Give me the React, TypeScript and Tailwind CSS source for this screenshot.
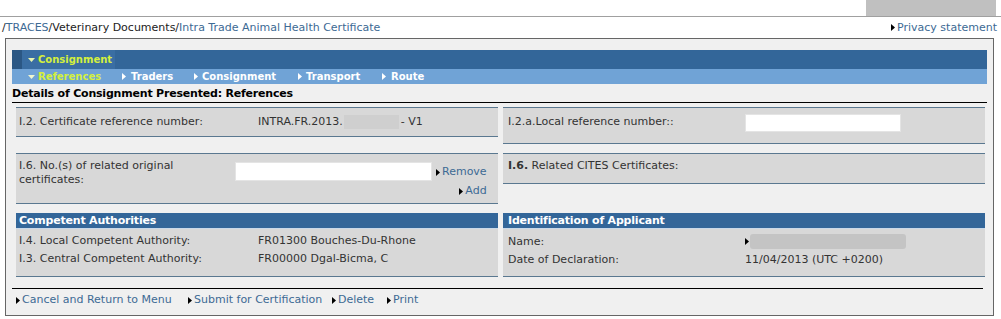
import React from 'react';

const Right = ({ color = '#000' }: { color?: string }) => (
  <svg width="4" height="7" viewBox="0 0 4 7" className="inline-block shrink-0 mr-[2px]">
    <path d="M0 0L4 3.5L0 7Z" fill={color} />
  </svg>
);

const Down = ({ color }: { color: string }) => (
  <svg width="7" height="4" viewBox="0 0 7 4" className="inline-block shrink-0 mr-[3px]">
    <path d="M0 0H7L3.5 4Z" fill={color} />
  </svg>
);

const Cell: React.FC<{ className?: string; children: React.ReactNode }> = ({ className = '', children }) => (
  <div className={`w-[482px] border-y border-[#5a7890] bg-[#d8d8d8] ${className}`}>{children}</div>
);

const App: React.FC = () => {
  return (
    <div className="w-[1001px] h-[319px] bg-white overflow-hidden font-['DejaVu_Sans',Verdana,sans-serif] text-[11px] leading-[14px] text-[#333]">
      <div className="h-[17px] flex justify-end border-b border-[#a0a0a0]">
        <div className="w-[130px] h-[16px] bg-[#c0c0c0] mr-[5px]" />
      </div>

      <div className="h-[20px] flex items-center justify-between pl-[2px] pr-[4px] pt-[1px]">
        <div>
          <span className="text-[#222]">/</span>
          <span className="text-[#3d6a94]">TRACES</span>
          <span className="text-[#222]">/Veterinary Documents/</span>
          <span className="text-[#3d6a94]">Intra Trade Animal Health Certificate</span>
        </div>
        <div className="flex items-center">
          <Right />
          <span className="text-[#3d6a94]">Privacy statement</span>
        </div>
      </div>

      <div className="ml-[5px] mt-[1px] w-[989px] h-[278px] border border-[#666] bg-[#f0f0f0] pt-[11px] pl-[6px]">
        <div className="w-[975px] h-[19px] bg-[#336699] flex">
          <div className="w-[10px] bg-[#2b5784]" />
          <div className="w-[93px] bg-[#3a6ea3] flex items-center pl-[6px] text-[10px] font-bold text-[#d4f03c]">
            <Down color="#e8f4b0" />
            Consignment
          </div>
        </div>
        <div className="w-[975px] h-[15px] bg-[#70a3d6] flex items-center pl-[16px] text-[10px] font-bold text-white">
          <span className="w-[94px] text-[#d4f03c] flex items-center">
            <Down color="#f0f6d0" />
            References
          </span>
          <span className="w-[72px] flex items-center">
            <Right color="#fff" />
            <span className="ml-[3px]">Traders</span>
          </span>
          <span className="w-[104px] flex items-center">
            <Right color="#fff" />
            <span className="ml-[2px]">Consignment</span>
          </span>
          <span className="w-[84px] flex items-center">
            <Right color="#fff" />
            <span className="ml-[2px]">Transport</span>
          </span>
          <span className="flex items-center">
            <Right color="#fff" />
            <span className="ml-[3px]">Route</span>
          </span>
        </div>

        <div className="w-[975px] h-[19px] flex items-end border-b border-black pb-[1px] font-bold text-black tracking-[-0.2px]">
          Details of Consignment Presented: References
        </div>

        <div className="pl-[4px] pt-[4px] flex flex-col gap-[9px]">
          <div className="flex gap-[5px] items-start">
            <Cell className="h-[30px] flex items-center pl-[3px]">
              <span className="w-[239px]">I.2. Certificate reference number:</span>
              <span>INTRA.FR.2013.</span>
              <span className="w-[55px] h-[14px] bg-[#cfcfcf] ml-[1px]" />
              <span className="ml-[2px]">- V1</span>
            </Cell>
            <Cell className="h-[37px] flex items-start pl-[5px] pt-[6px]">
              <span className="w-[237px] mt-[1px]">I.2.a.Local reference number::</span>
              <input
                type="text"
                className="w-[156px] h-[18px] bg-white border border-[#e4e4e4] outline-none"
              />
            </Cell>
          </div>

          <div className="flex gap-[5px] items-start">
            <Cell className="h-[51px] flex pl-[3px]">
              <div className="w-[216px] pt-[5px]">
                I.6. No.(s) of related original
                <br />
                certificates:
              </div>
              <div className="pt-[8px]">
                <input
                  type="text"
                  className="w-[197px] h-[19px] bg-white border border-[#e4e4e4] outline-none"
                />
              </div>
              <div className="ml-[4px] pt-[11px] flex flex-col items-end">
                <span className="flex items-center text-[#3d6a94]">
                  <Right />
                  Remove
                </span>
                <span className="flex items-center text-[#3d6a94] mt-[5px]">
                  <Right />
                  Add
                </span>
              </div>
            </Cell>
            <Cell className="h-[31px] pl-[5px] pt-[5px]">
              <span className="font-bold">I.6.</span> Related CITES Certificates:
            </Cell>
          </div>

          <div className="flex gap-[5px] items-start">
            <div className="w-[482px] border-b border-[#5a7890]">
              <div className="h-[15px] bg-[#336699] border-b border-[#c9d9ea] box-content pl-[3px] flex items-center font-bold text-white tracking-[-0.2px]">
                Competent Authorities
              </div>
              <div className="h-[47px] bg-[#d8d8d8] pl-[3px] pt-[5px] flex flex-col gap-[4px]">
                <div className="flex">
                  <span className="w-[239px]">I.4. Local Competent Authority:</span>
                  <span>FR01300 Bouches-Du-Rhone</span>
                </div>
                <div className="flex">
                  <span className="w-[239px]">I.3. Central Competent Authority:</span>
                  <span>FR00000 Dgal-Bicma, C</span>
                </div>
              </div>
            </div>
            <div className="w-[482px] border-b border-[#5a7890]">
              <div className="h-[15px] bg-[#336699] border-b border-[#c9d9ea] box-content pl-[5px] flex items-center font-bold text-white tracking-[-0.2px]">
                Identification of Applicant
              </div>
              <div className="h-[47px] bg-[#d8d8d8] pl-[5px] pt-[5px] flex flex-col gap-[4px]">
                <div className="flex items-center">
                  <span className="w-[237px]">Name:</span>
                  <Right />
                  <span className="w-[156px] h-[15px] bg-[#c4c4c4] rounded-[3px] -ml-[1px]" />
                </div>
                <div className="flex">
                  <span className="w-[237px]">Date of Declaration:</span>
                  <span>11/04/2013 (UTC +0200)</span>
                </div>
              </div>
            </div>
          </div>
        </div>

        <div className="w-[971px] mt-[11px] border-t border-black pt-[4px] pl-[4px] flex items-center text-[#3d6a94]">
          <span className="w-[172px] flex items-center">
            <Right />
            Cancel and Return to Menu
          </span>
          <span className="w-[144px] flex items-center">
            <Right />
            Submit for Certification
          </span>
          <span className="w-[55px] flex items-center">
            <Right />
            Delete
          </span>
          <span className="flex items-center">
            <Right />
            Print
          </span>
        </div>
      </div>
    </div>
  );
};

export default App;
